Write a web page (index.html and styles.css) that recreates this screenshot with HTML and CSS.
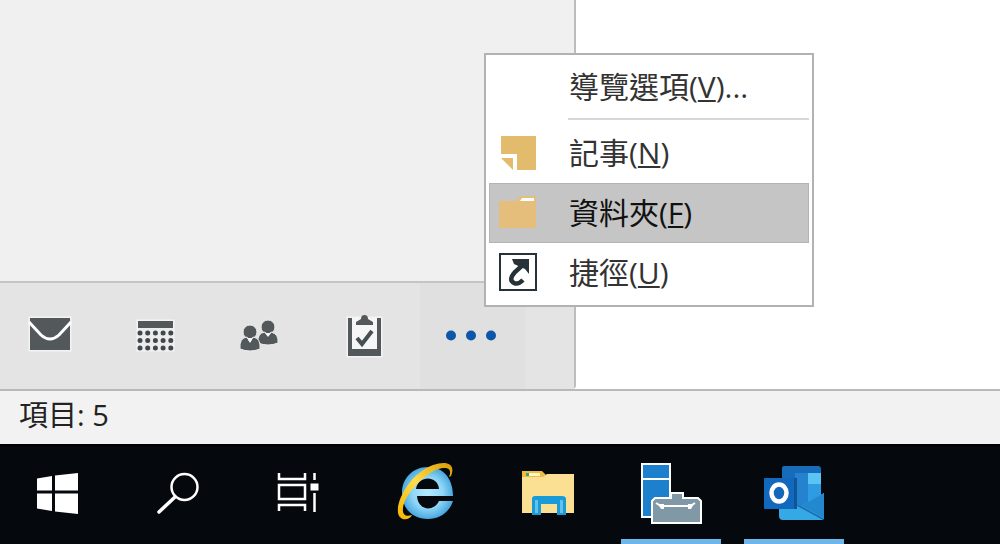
FILE: index.html
```html
<!DOCTYPE html>
<html lang="zh-Hant">
<head>
  <meta charset="UTF-8" />
  <meta name="viewport" content="width=device-width, initial-scale=1.0"/>
  <title>Outlook</title>
  <link rel="stylesheet" href="styles.css">
</head>
<body>

  <main class="workspace">
    <aside class="sidebar">
      <div class="folders"></div>
      <nav class="modules">
        <button class="module" aria-label="郵件">
          <svg viewBox="22 306 61 60">
            <path class="halo" d="M30 318H70V350H30Z"/>
            <path d="M30 318H70V350H30Z"/>
            <path class="cut" d="M29 322L41 335Q50 343 59 335L71 322"/>
          </svg>
        </button>
        <button class="module" aria-label="行事曆">
          <svg viewBox="127 306 61 60">
            <path class="halo" d="M138 321H173V350H138Z"/>
            <path class="back" d="M138 321H173V350H138Z"/>
            <path d="M138 321H173V328H138Z"/>
            <path class="dots" d="M140 333h0M147.700 333h0M155.400 333h0M163.100 333h0M170.800 333h0M140 340.500h0M147.700 340.500h0M155.400 340.500h0M163.100 340.500h0M170.800 340.500h0M140 348h0M147.700 348h0M155.400 348h0M163.100 348h0M170.800 348h0"/>
          </svg>
        </button>
        <button class="module" aria-label="連絡人">
          <svg viewBox="232 306 61 60">
            <circle class="edge" cx="268" cy="327" r="7"/>
            <path class="edge" d="M258 343Q257 333 265 332L268 336L271 332Q279 334 278 343Q268 347 258 343Z"/>
            <path class="paper" d="M265 333L268 337L271 333Z"/>
            <circle class="edge" cx="250" cy="332" r="7"/>
            <path class="edge" d="M240 349Q239 338 247 337L250 342L253 337Q261 338 260 349Q250 353 240 349Z"/>
            <path class="paper" d="M247 338L250 343L253 338Z"/>
          </svg>
        </button>
        <button class="module" aria-label="工作">
          <svg viewBox="337 306 61 60">
            <path class="halo" d="M348 318H381V356H348Z"/>
            <path class="paper" d="M351 318H378V350H351Z"/>
            <path d="M348 318H352V349H377V318H381V356H348Z"/>
            <path d="M356 325V322L361 319Q361 315 364.500 315Q368 315 368 319L373 322V325Z"/>
            <path class="tick" d="M357 338L362 344L372 331"/>
          </svg>
        </button>
        <div class="more">
          <button class="module active" aria-label="其他" aria-haspopup="menu" aria-expanded="true">
            <svg viewBox="442 306 61 60">
              <circle cx="451" cy="335.500" r="5"/>
              <circle cx="471" cy="335.500" r="5"/>
              <circle cx="491" cy="335.500" r="5"/>
            </svg>
          </button>
          <div class="menu" role="menu">
            <button class="item" role="menuitem"><span class="icon"></span><span>導覽選項(<u>V</u>)...</span></button>
            <div class="separator" role="separator"></div>
            <button class="item" role="menuitem">
              <svg class="icon" viewBox="0 0 40 40">
                <path fill="#e2bc6c" d="M3 3H38V37H19V21H3Z"/>
                <path fill="#e2bc6c" d="M3 25H15V37Z"/>
              </svg>
              <span>記事(<u>N</u>)</span>
            </button>
            <button class="item selected" role="menuitem">
              <svg class="icon" viewBox="0 0 40 40">
                <path fill="#e6be7c" d="M1 8H18L22 3H38V35H1Z"/>
                <path fill="#fff" d="M24 5H36V8H22Z"/>
              </svg>
              <span>資料夾(<u>F</u>)</span>
            </button>
            <button class="item" role="menuitem">
              <svg class="icon" viewBox="0 0 40 40">
                <path fill="#fff" stroke="#263238" stroke-width="2" d="M2 1H38V37H2Z"/>
                <path fill="#263238" d="M14 6H31V21L27 16L16 11Z"/>
                <path fill="none" stroke="#263238" stroke-width="4.500" d="M28 9L17 19Q10 27 16 30Q20 32 25 27"/>
              </svg>
              <span>捷徑(<u>U</u>)</span>
            </button>
          </div>
        </div>
      </nav>
    </aside>
    <section class="reading"></section>
  </main>

  <footer class="status">項目: 5</footer>

  <div class="taskbar">
    <button class="system" aria-label="開始">
      <svg viewBox="20 455 80 80">
        <path fill="#fff" d="M37 478.500L52 476V490.500H37ZM55 475.500L78 473V490.500H55ZM37 493.500H52V511L37 508.500ZM55 493.500H78V514L55 511.500Z"/>
      </svg>
    </button>
    <button class="system" aria-label="搜尋">
      <svg viewBox="140 455 80 80" fill="none" stroke="#fff">
        <circle cx="184.500" cy="487" r="13" stroke-width="2.500"/>
        <path stroke-width="3.500" stroke-linecap="round" d="M175 497L159 512"/>
      </svg>
    </button>
    <button class="system" aria-label="工作檢視">
      <svg viewBox="260 455 80 80" fill="none" stroke="#fff" stroke-width="2.500">
        <path d="M279 473V479H305V473M279 485H305V499H279ZM279 511V505H305V511M314.500 473V480M314.500 493V512"/>
        <path fill="#fff" stroke="none" d="M310.500 483.500H318.500V490.500H310.500Z"/>
      </svg>
    </button>
    <div class="apps">
      <button class="app" aria-label="Internet Explorer">
        <svg viewBox="385 455 80 80">
          <defs>
            <radialGradient id="ie"><stop offset="0" stop-color="#b5eaff"/><stop offset=".6" stop-color="#8fd6f7"/><stop offset="1" stop-color="#4aa9df"/></radialGradient>
            <linearGradient id="ring" x1="0" y1="1" x2="1" y2="0"><stop offset="0" stop-color="#f5b400"/><stop offset=".5" stop-color="#ffdc4a"/><stop offset="1" stop-color="#d99a00"/></linearGradient>
          </defs>
          <path fill="url(#ie)" fill-rule="evenodd" d="M428 467C443 467 453 478 453 496H417C418 511 434 512 439 501H453C449 513 439 519 428 519C412 519 402 508 402 493C402 478 413 467 428 467ZM416 489H439C438 475 418 475 416 489Z"/>
          <path fill="url(#ring)" d="M449 477C453 468 446 466 436 470C422 476 404 496 403 508C402 515 406 517 412 515C410 520 400 522 398 513C396 498 413 472 433 465C447 460 456 464 451 476Z"/>
        </svg>
      </button>
      <button class="app" aria-label="檔案總管">
        <svg viewBox="508 455 80 80">
          <path fill="#eebc3e" d="M522 471H542L546 475V480H522Z"/>
          <path fill="#fbe093" d="M522 477H543L547 474H574V513H522Z"/>
          <path fill="#fff5c9" d="M526 473H540V476H526Z"/>
          <path fill="#35a184" d="M526 473H529V476H526Z"/>
          <path fill="#199bd7" d="M532 499Q532 496 535 496H562Q566 496 566 499V515H557V504H541V515H532Z"/>
          <path fill="#64c1ea" d="M535 500H538V513H535ZM560 500H563V513H560Z"/>
        </svg>
      </button>
      <button class="app open" aria-label="伺服器管理員">
        <svg viewBox="631 455 80 80" stroke="#fff" stroke-width="2">
          <path fill="#1c80cd" d="M642 464H670V517H642ZM642 479H670"/>
          <path fill="#8198a7" d="M671 498V493H683V498H698L701 501V523H652V501L655 498Z"/>
          <path fill="none" d="M656 503L661 506H690L695 503"/>
          <path fill="#fff" stroke="none" d="M658 504H664V509H661ZM688 504H694L691 509H688Z"/>
        </svg>
      </button>
      <button class="app open" aria-label="Outlook">
        <svg viewBox="754 455 80 80">
          <path fill="#176cb9" d="M782 468Q782 466 784 466H818Q821 466 821 469V505H782Z"/>
          <path fill="#2482cf" d="M795 473H808V484H795ZM795 484H808V506H795Z"/>
          <path fill="#5bc4f2" d="M808 473H821V484H808Z"/>
          <path fill="#2e9be3" d="M808 484H821V502H808Z"/>
          <path fill="#35a9e3" d="M779 496L801 506L824 493V518Q824 520 821 520H783Q779 520 779 516Z"/>
          <path fill="#2389cf" d="M801 506L824 493V518Z"/>
          <path stroke="#1a6bae" stroke-width="1.500" d="M797 505L823 519"/>
          <path fill="#0f5699" d="M782 478H797V509H782Z"/>
          <rect x="764" y="478" width="30" height="31" rx="1" fill="#1268bd"/>
          <ellipse cx="779" cy="493" rx="7.500" ry="8.500" fill="none" stroke="#fff" stroke-width="4.500"/>
        </svg>
      </button>
    </div>
  </div>

</body>
</html>
```
FILE: styles.css
```css
* {
  box-sizing: border-box;
}
body {
  display: flex;
  flex-direction: column;
  min-height: 100vh;
  margin: 0;
  background: #fff;
  color: #333;
  font-family: "Open Sans", "Noto Sans CJK TC", sans-serif;
}
button {
  padding: 0;
  border: 0;
  background: none;
  color: inherit;
  font: inherit;
}
svg {
  display: block;
}

/* folder pane */
.workspace {
  display: flex;
  flex: 1;
}
.sidebar {
  display: flex;
  flex-direction: column;
  width: 57.6%;
  border-right: 2px solid #bdbdbd;
  border-bottom-right-radius: 4px;
  background: #f0f0f0;
}
.folders {
  flex: 1;
}
.modules {
  display: flex;
  height: 108px;
  border-top: 2px solid #c4c4c4;
  background: #e4e4e4;
}
.module {
  display: flex;
  align-items: center;
  justify-content: center;
  width: 105px;
  height: 100%;
}
.module svg {
  width: 61px;
  height: 60px;
  fill: #53595a;
}
.module.active {
  background: #e0e0e0;
}
.module.active svg {
  fill: #0c57a8;
}
.module .halo {
  fill: none;
  stroke: #f3f3f3;
  stroke-width: 3;
}
.module .back {
  fill: #ececec;
}
.module .cut {
  fill: none;
  stroke: #fff;
  stroke-width: 3;
}
.module .dots {
  fill: none;
  stroke: #3f484a;
  stroke-width: 5;
  stroke-linecap: round;
}
.module .edge {
  stroke: #eee;
  stroke-width: 1;
}
.module .paper {
  fill: #f6f6f6;
}
.module .tick {
  fill: none;
  stroke: #465052;
  stroke-width: 4;
}

/* overflow menu */
.more {
  position: relative;
}
.menu {
  position: absolute;
  left: 64px;
  bottom: 82px;
  width: 330px;
  padding: 2px 3px;
  border: 2px solid #b2b2b2;
  background: #fff;
  font-size: 30px;
}
.item {
  display: flex;
  align-items: center;
  gap: 31px;
  width: 100%;
  height: 60px;
  padding-left: 9px;
  line-height: 40px;
  white-space: nowrap;
}
.item.selected {
  background: #c5c5c5;
  outline: 1px solid #b4b4b4;
  outline-offset: -1px;
  color: #111;
}
.item u {
  text-decoration-thickness: 2px;
  text-underline-offset: 2px;
}
.icon {
  width: 40px;
  height: 40px;
}
.separator {
  height: 2px;
  margin: 1px 0 3px 79px;
  background: #d5d8da;
}

.status {
  height: 55px;
  padding-left: 19px;
  border-top: 2px solid #b9b9b9;
  background: #f2f2f2;
  color: #222;
  font-size: 29px;
  line-height: 48px;
}

/* taskbar */
.taskbar {
  display: flex;
  height: 100px;
  border-top: 2px solid #000;
  background: #05090e;
}
.taskbar svg {
  width: 80px;
  height: 80px;
  margin: 0 auto;
}
.system {
  width: 120px;
}
.apps {
  display: flex;
  gap: 23px;
  padding-left: 15px;
}
.app {
  width: 100px;
  border-bottom: 5px solid transparent;
  border-top: 5px solid transparent;
}
.app.open {
  border-bottom-color: #6fb7ea;
}
```
